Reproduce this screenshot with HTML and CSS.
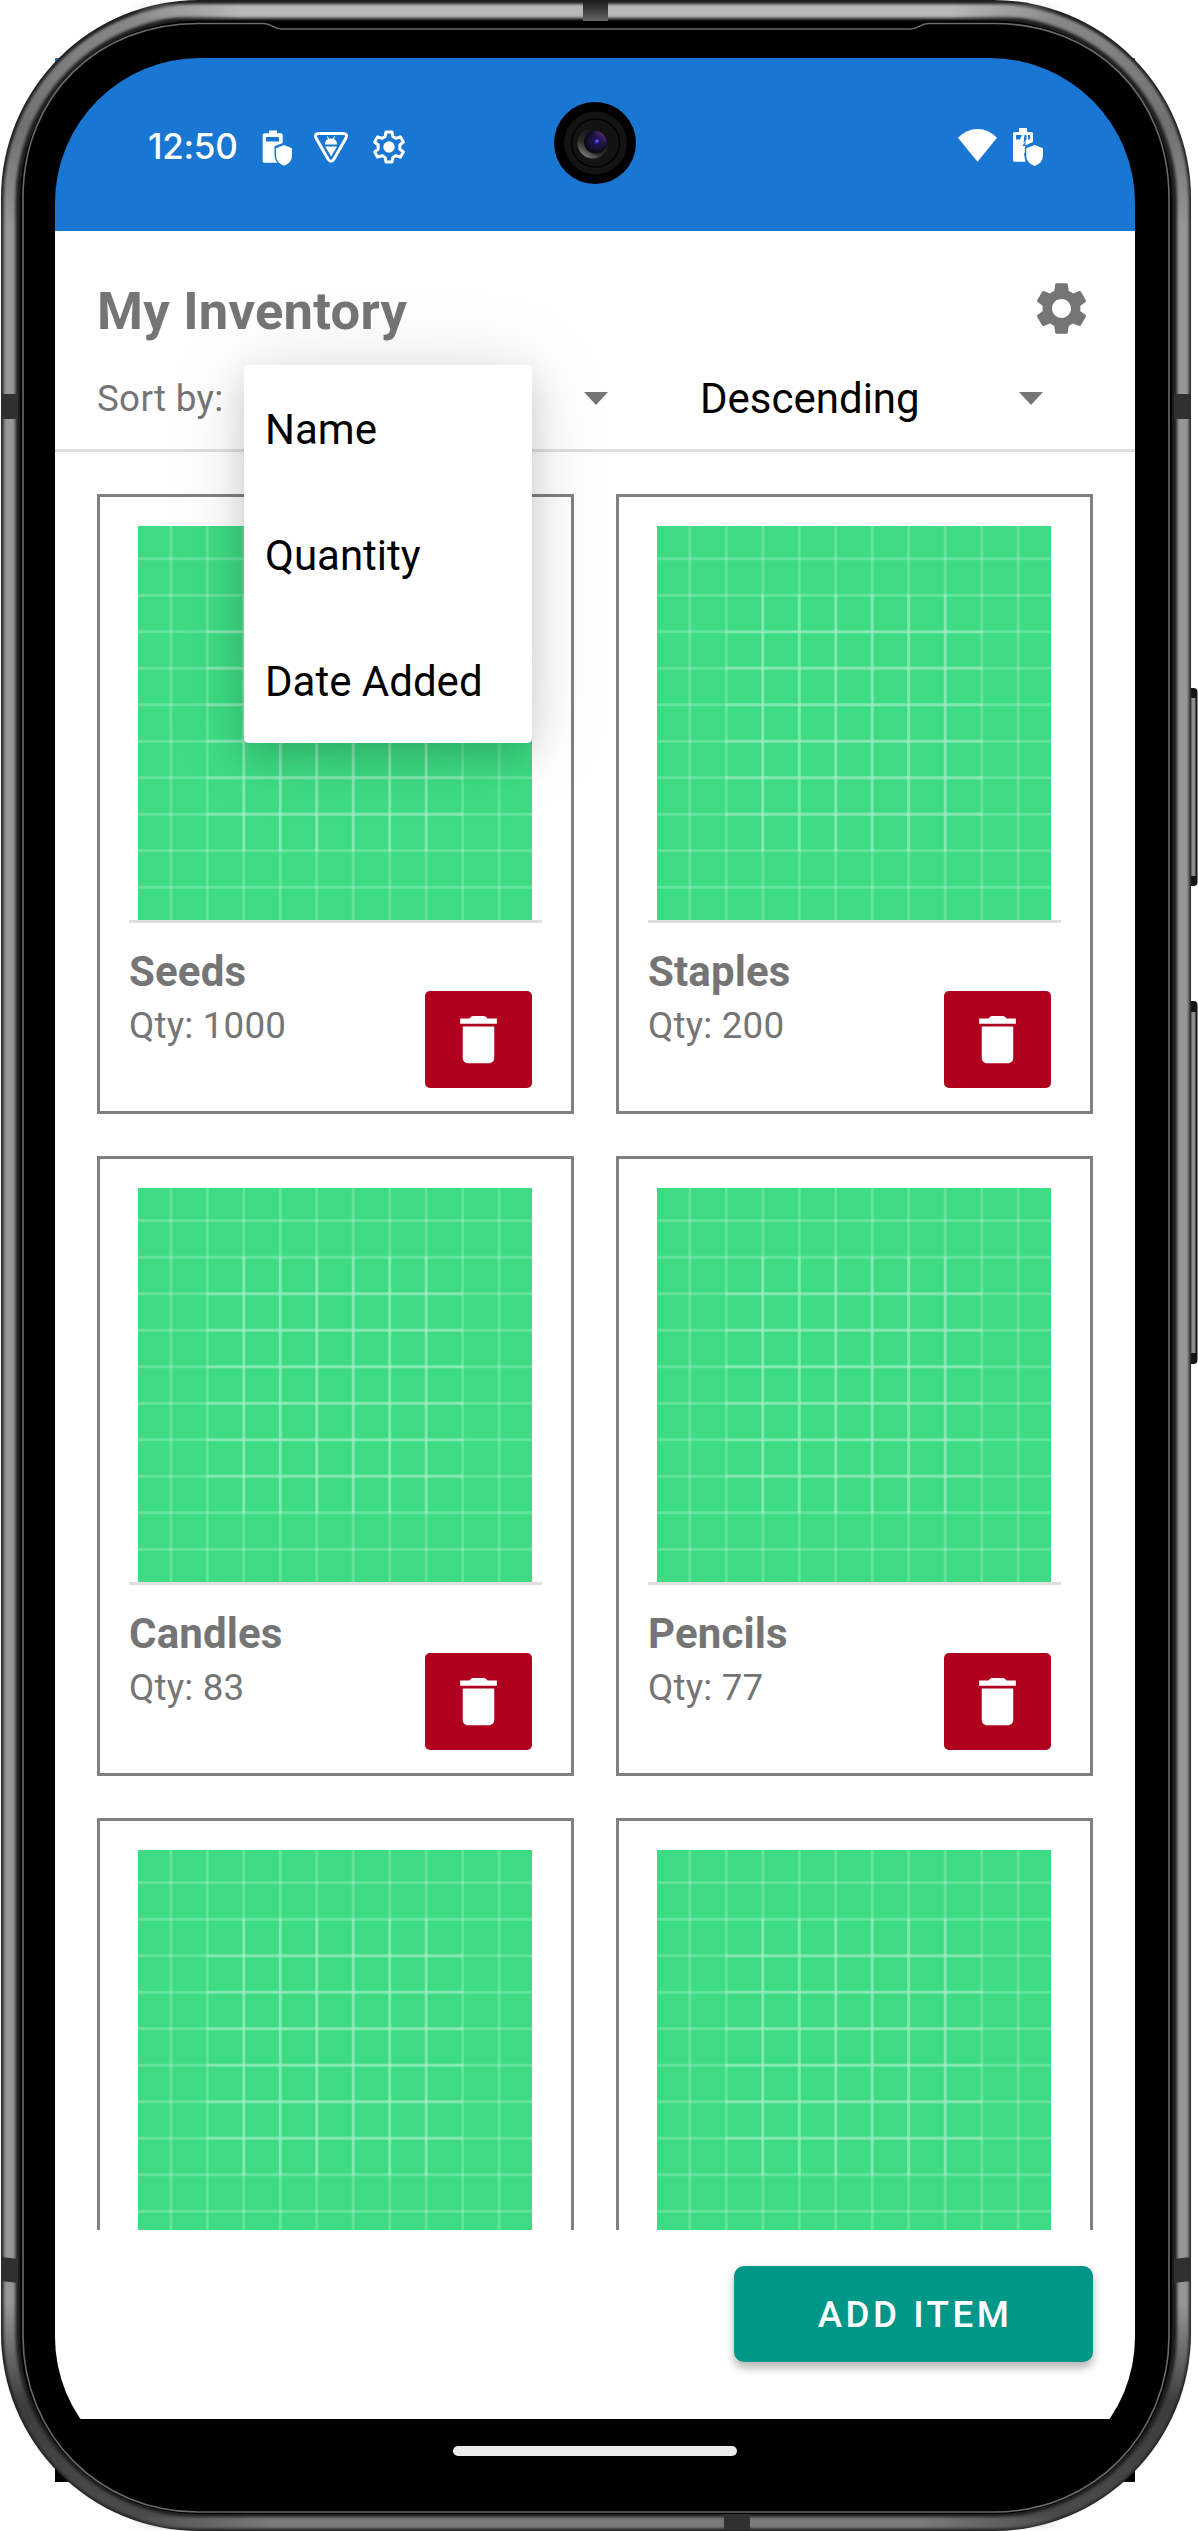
FILE: index.html
```html
<!DOCTYPE html>
<html lang="en">
<head>
<meta charset="utf-8">
<title>My Inventory</title>
<link rel="stylesheet" href="styles.css">
</head>
<body>
<svg class="defs" width="0" height="0" aria-hidden="true">
  <symbol id="placeholder" viewBox="0 0 108 108">
    <rect width="108" height="108" fill="#3ddc84"/>
    <path d="M9 0V108M19 0V108M29 0V108M39 0V108M49 0V108M59 0V108M69 0V108M79 0V108M89 0V108M99 0V108" stroke="#fff" stroke-opacity=".2" stroke-width=".8"/>
    <path d="M0 9H108M0 19H108M0 29H108M0 39H108M0 49H108M0 59H108M0 69H108M0 79H108M0 89H108M0 99H108" stroke="#fff" stroke-opacity=".2" stroke-width=".8"/>
    <path d="M19 29H89M19 39H89M19 49H89M19 59H89M19 69H89M19 79H89M29 19V89M39 19V89M49 19V89M59 19V89M69 19V89M79 19V89" stroke="#fff" stroke-opacity=".2" stroke-width=".8"/>
  </symbol>
  <symbol id="trash" viewBox="0 0 24 24">
    <path fill="#fff" d="M6 19c0 1.1.9 2 2 2h8c1.1 0 2-.9 2-2V7H6v12zM19 4h-3.500l-.7-.7q-.3-.3-.8-.3h-4q-.5 0-.8.3l-.7.7H5v2h14V4z"/>
  </symbol>
</svg>
<div class="device">
  <svg class="frame" width="1198" height="2531" viewBox="0 0 1198 2531" aria-hidden="true">
    <defs>
      <linearGradient id="metal" gradientUnits="userSpaceOnUse" x1="0" y1="0" x2="0" y2="2531">
        <stop offset="0" stop-color="#8c8c8c"/><stop offset=".05" stop-color="#707070"/><stop offset=".09" stop-color="#969696"/>
        <stop offset=".91" stop-color="#969696"/><stop offset=".95" stop-color="#3c3c3c"/><stop offset="1" stop-color="#4c4c4c"/>
      </linearGradient>
      <linearGradient id="topline" gradientUnits="userSpaceOnUse" x1="130" y1="0" x2="1062" y2="0">
        <stop offset="0" stop-color="#b8b8b8" stop-opacity="0"/><stop offset=".12" stop-color="#b8b8b8"/><stop offset=".88" stop-color="#b8b8b8"/><stop offset="1" stop-color="#b8b8b8" stop-opacity="0"/>
      </linearGradient>
      <linearGradient id="bottomline" gradientUnits="userSpaceOnUse" x1="130" y1="0" x2="1062" y2="0">
        <stop offset="0" stop-color="#7a7a7a" stop-opacity="0"/><stop offset=".15" stop-color="#7a7a7a"/><stop offset=".85" stop-color="#7a7a7a"/><stop offset="1" stop-color="#7a7a7a" stop-opacity="0"/>
      </linearGradient>
      <linearGradient id="notch" x1="0" y1="0" x2="0" y2="1"><stop offset="0" stop-color="#1c1c1c"/><stop offset="1" stop-color="#666"/></linearGradient>
      <linearGradient id="key" x1="0" y1="0" x2="1" y2="0"><stop offset="0" stop-color="#555"/><stop offset=".35" stop-color="#999"/><stop offset=".65" stop-color="#888"/><stop offset="1" stop-color="#111"/></linearGradient>
      <filter id="soft" filterUnits="userSpaceOnUse" x="0" y="0" width="1198" height="2531"><feGaussianBlur stdDeviation="1.8"/></filter>
    </defs>
    <path fill="#1976d2" d="M55 58h30v30h-30zM1105 58h30v30h-30z"/>
    <path d="M55 2440h50v42h-50zM1085 2440h50v42h-50z"/>
    <rect x="1185" y="688" width="12.500" height="198" rx="4" fill="#151515"/>
    <rect x="1191" y="698" width="5.500" height="178" fill="url(#key)"/>
    <rect x="1185" y="1001" width="12.500" height="363" rx="4" fill="#151515"/>
    <rect x="1191" y="1012" width="5.500" height="341" fill="url(#key)"/>
    <rect x="1" y="0" width="1190" height="2531" rx="198" fill="#1d1d1d"/>
    <g filter="url(#soft)" fill="none">
      <rect x="9.500" y="10" width="1173.500" height="2513" rx="189" stroke="url(#metal)" stroke-width="12"/>
      <rect x="130" y="4" width="932" height="14" fill="url(#topline)"/>
      <rect x="130" y="2517" width="932" height="11" fill="url(#bottomline)"/>
    </g>
    <rect x="20" y="20.500" width="1152" height="2493.500" rx="178"/>
    <path fill="none" stroke="#6a6a6a" stroke-width="1.600" d="M23 198C23 95 98 23.500 198 23.500H264C272 23.500 273 29 282 29H910C919 29 920 23.500 928 23.500H994C1094 23.500 1169 95 1169 198V2336C1169 2435 1093 2512 994 2512H198C99 2512 23 2435 23 2336Z"/>
    <rect x="583" y="1" width="25" height="20" fill="url(#notch)"/>
    <path fill="#303030" d="M1.500 394H18v25H1.500zM1174 394h17v25h-17zM1.500 2257l16.500 2v24l-16.500-2zM1174 2259l17-2v24l-17 2zM724 2514h26v16h-26z"/>
  </svg>
  <main class="screen">
    <header class="status">
      <span class="clock">12:50</span>
      <svg class="ico-battery" width="30" height="37" viewBox="262 130 30 37">
        <path fill="#fff" fill-rule="evenodd" d="M269 130.500h8v2.700h4.200q1.500 0 1.500 1.500V143l-8.200 3.200v9.500q0 4 3 7H264.200q-1.500 0-1.500-1.500V134.700q0-1.500 1.500-1.500h4.800zM266 137v4.500h13V137z"/>
        <path fill="#fff" d="M284 145l8 3.200v7q0 7.500-8 10.600q-8-3.100-8-10.600v-7z"/>
      </svg>
      <svg class="ico-debug" width="36" height="34" viewBox="313 130 36 34">
        <path fill="none" stroke="#fff" stroke-width="3" stroke-linejoin="round" d="M319 133.500H343Q348 133.500 346 138L334 159Q331 163.500 328 159L316 138Q314 133.500 319 133.500Z"/>
        <path fill="#fff" d="M325 144.500q0-4 3.200-5.400l-1.400-2.300.9-.5 1.500 2.400q1.800-.5 3.600 0l1.500-2.400.9.500-1.400 2.300q3.200 1.400 3.200 5.400zM325.200 146.500H337l-5.900 10z"/>
      </svg>
      <svg class="ico-gear" width="40" height="40" viewBox="0 0 24 24">
        <path fill="none" stroke="#fff" stroke-width="1.800" stroke-linejoin="round" d="M10.200 3h3.600l.5 2.700 1.900 1.100 2.600-.9 1.800 3.100-2.100 1.800v2.400l2.100 1.800-1.800 3.100-2.600-.9-1.900 1.100-.5 2.700h-3.600l-.5-2.700-1.900-1.100-2.600.9L3.400 15l2.100-1.800v-2.400L3.400 9l1.800-3.100 2.600.9 1.900-1.100z"/>
        <circle cx="12" cy="12" r="3.400" fill="#fff"/>
      </svg>
      <svg class="ico-wifi" width="39" height="33" viewBox="958 129 39 33"><path fill="#fff" d="M977.500 161.700L958 137.800Q966.500 129 977.500 129T997 137.800z"/></svg>
      <svg class="ico-charge" width="31" height="38" viewBox="1013 128 31 38">
        <path fill="#fff" fill-rule="evenodd" d="M1019 128h8v4h4.500q1.500 0 1.500 1.500V142l-8 3.500 1-5-3.500 5.500h2.500v6l-1 2 1.500 7.700h-11q-1.500 0-1.500-1.500V133.500q0-1.500 1.500-1.500h4.500zM1016 135v4.500h4L1022 135zM1024.500 135l-1 8 3-3.500V135zM1028 135v4.500h2V135z"/>
        <path fill="#fff" d="M1034.600 145l8.400 3.200v7q0 7.700-8.400 10.800q-8.400-3.100-8.400-10.800v-7z"/>
      </svg>
    </header>

    <section class="toolbar">
      <div class="title-row">
        <h1>My Inventory</h1>
        <svg width="63" height="63" viewBox="0 0 24 24"><path fill="#757575" d="M19.140 12.940c.04-.3.060-.61.060-.94 0-.32-.02-.64-.07-.94l2.030-1.580c.18-.14.230-.41.120-.61l-1.920-3.320c-.12-.22-.37-.29-.59-.22l-2.390.96c-.5-.38-1.030-.7-1.620-.94l-.36-2.540c-.04-.24-.24-.41-.48-.41h-3.840c-.24 0-.43.170-.47.410l-.36 2.540c-.59.240-1.130.570-1.620.940l-2.390-.96c-.22-.08-.47 0-.59.220L2.740 8.870c-.12.210-.08.470.12.610l2.030 1.580c-.05.300-.09.630-.09.940s.02.640.07.940l-2.030 1.580c-.18.140-.23.410-.12.610l1.920 3.320c.12.220.37.290.59.220l2.390-.96c.5.380 1.030.7 1.620.940l.36 2.540c.05.240.24.410.48.410h3.840c.24 0 .44-.17.470-.41l.36-2.540c.59-.24 1.130-.56 1.620-.94l2.390.96c.22.080.47 0 .59-.22l1.920-3.320c.12-.22.070-.47-.12-.61l-2.010-1.580zM12 15.600c-1.980 0-3.600-1.620-3.600-3.600s1.620-3.600 3.600-3.600 3.600 1.620 3.600 3.600-1.620 3.600-3.600 3.600z"/></svg>
      </div>
      <div class="sort-row">
        <span class="sort-label">Sort by:</span>
        <div class="spinner"><span></span><i class="arrow"></i></div>
        <div class="spinner"><span>Descending</span><i class="arrow"></i></div>
      </div>
    </section>

    <section class="list">
      <article class="card">
        <svg class="photo"><use href="#placeholder"/></svg>
        <div class="info"><div class="label"><h2>Seeds</h2><p>Qty: 1000</p></div><button class="delete" aria-label="Delete"><svg width="63" height="63"><use href="#trash"/></svg></button></div>
      </article>
      <article class="card">
        <svg class="photo"><use href="#placeholder"/></svg>
        <div class="info"><div class="label"><h2>Staples</h2><p>Qty: 200</p></div><button class="delete" aria-label="Delete"><svg width="63" height="63"><use href="#trash"/></svg></button></div>
      </article>
      <article class="card">
        <svg class="photo"><use href="#placeholder"/></svg>
        <div class="info"><div class="label"><h2>Candles</h2><p>Qty: 83</p></div><button class="delete" aria-label="Delete"><svg width="63" height="63"><use href="#trash"/></svg></button></div>
      </article>
      <article class="card">
        <svg class="photo"><use href="#placeholder"/></svg>
        <div class="info"><div class="label"><h2>Pencils</h2><p>Qty: 77</p></div><button class="delete" aria-label="Delete"><svg width="63" height="63"><use href="#trash"/></svg></button></div>
      </article>
      <article class="card"><svg class="photo"><use href="#placeholder"/></svg></article>
      <article class="card"><svg class="photo"><use href="#placeholder"/></svg></article>
    </section>

    <footer class="actions"><button class="add">ADD ITEM</button></footer>
    <nav class="navbar"><i class="pill"></i></nav>

    <ul class="menu"><li>Name</li><li>Quantity</li><li>Date Added</li></ul>
    <svg class="camera" width="82" height="82" viewBox="0 0 82 82">
      <defs>
        <radialGradient id="lens" cx=".55" cy=".48" r=".5"><stop offset="0" stop-color="#4a36c8"/><stop offset=".25" stop-color="#1e1458"/><stop offset=".6" stop-color="#1c1238"/><stop offset="1" stop-color="#0a0a14"/></radialGradient>
        <linearGradient id="ring" x1=".2" y1=".9" x2=".7" y2=".2"><stop offset="0" stop-color="#777"/><stop offset=".35" stop-color="#2c2c2c"/><stop offset="1" stop-color="#111"/></linearGradient>
        <linearGradient id="glow" x1=".2" y1=".8" x2="1" y2="0"><stop offset=".5" stop-color="#603090" stop-opacity="0"/><stop offset="1" stop-color="#7a48a8"/></linearGradient>
      </defs>
      <circle cx="41" cy="41" r="41"/>
      <circle cx="41.500" cy="41" r="31.500" fill="#131313"/>
      <circle cx="41.500" cy="41" r="24" fill="#131313" stroke="#000" stroke-width="1.500"/>
      <circle cx="39" cy="41" r="15.500" fill="url(#ring)"/>
      <circle cx="41.500" cy="40" r="11.500" fill="url(#lens)"/>
      <circle cx="41.500" cy="40" r="11" fill="url(#glow)"/>
      <circle cx="43" cy="39" r="1.600" fill="#5a58f0"/>
    </svg>
  </main>
</div>
</body>
</html>
```

FILE: styles.css
```css
* { box-sizing: border-box; margin: 0; padding: 0; }
body { background: #fff; font-family: Roboto, "Liberation Sans", sans-serif; color: #000; }
svg { display: block; }
button { border: 0; font: inherit; }
.defs { position: absolute; }
.device { position: relative; width: 1198px; height: 2531px; padding: 58px 63px 49px 55px; overflow: hidden; }
.frame { position: absolute; left: 0; top: 0; }
.screen {
  position: relative; width: 1080px; height: 2424px; overflow: hidden;
  border-radius: 145px; display: flex; flex-direction: column;
}

/* Status bar */
.status { height: 173px; flex: none; background: #1976d2; color: #fff; display: flex; align-items: flex-start; padding: 70px 91px 0 93px; }
.clock { font: 500 35px/37px Inter, sans-serif; width: 114px; letter-spacing: -0.3px; }
.ico-battery { margin-top: 2px; }
.ico-debug { margin: 2px 0 0 21px; }
.ico-gear { margin: -1px 0 0 20px; }
.ico-wifi { margin: 1px 0 0 auto; }
.ico-charge { margin: 0 0 0 16px; }

/* Header */
.toolbar { height: 221px; flex: none; background: #fff; border-bottom: 3px solid #e0e0e0; padding-top: 46px; }
.title-row { display: flex; align-items: center; justify-content: space-between; height: 63px; padding: 0 42px; }
h1 { font-size: 52.5px; font-weight: 700; line-height: 62px; letter-spacing: 0.25px; color: #757575; padding-top: 4px; }
.sort-row { display: grid; grid-template-columns: 147px 435px 435px; align-items: center; height: 109px; padding: 7px 0 0 42px; }
.sort-label { font-size: 36.75px; letter-spacing: 0.3px; color: #757575; }
.spinner { display: flex; align-items: center; justify-content: space-between; height: 63px; padding: 0 71px 0 21px; font-size: 42px; }
.arrow { border: solid transparent; border-width: 13px 12.5px 0; border-top-color: #757575; }

/* Items */
.list { height: 1778px; flex: none; background: #fff; overflow: hidden; padding: 42px; display: grid; grid-template-columns: 477px 477px; grid-auto-rows: 620px; gap: 42px; }
.card { border: 3px solid #808080; padding: 29px 29px 0; }
.photo { width: 394px; height: 394px; margin-left: 9px; }
.info { border-top: 3px solid #e0e0e0; display: flex; justify-content: space-between; align-items: flex-start; padding-right: 10px; color: #757575; }
.label { padding-top: 24px; }
h2 { font-size: 42px; font-weight: 700; line-height: 49px; letter-spacing: 0.15px; }
.label p { font-size: 36.75px; line-height: 43px; letter-spacing: 0.2px; margin-top: 8px; }
.delete { width: 107px; height: 97px; margin-top: 68px; border-radius: 5px; background: #b00020; display: flex; align-items: center; justify-content: center; }

/* Bottom */
.actions { height: 189px; flex: none; background: #fff; padding: 36px 42px; display: flex; justify-content: flex-end; align-items: flex-start; }
.add {
  width: 359px; height: 96px; border-radius: 10px; background: #009688; color: #fff; padding: 1px 0 0 3px;
  font-size: 36.75px; font-weight: 500; letter-spacing: 3.5px; box-shadow: 0 6px 8px rgba(0,0,0,.24), 0 3px 12px rgba(0,0,0,.08);
}
.navbar { height: 63px; flex: none; background: #000; display: flex; justify-content: center; padding-top: 27px; }
.pill { width: 284px; height: 10px; border-radius: 5px; background: #ebebeb; }

/* Overlays */
.menu {
  position: absolute; left: 189px; top: 307px; width: 288px; height: 378px; padding-top: 2px; list-style: none; background: #fff;
  border-radius: 5px; font-size: 42px; box-shadow: 0 14px 32px rgba(0,0,0,.13), 0 4px 84px rgba(0,0,0,.13);
}
.menu li { height: 126px; line-height: 126px; padding-left: 21px; }
.camera { position: absolute; left: 499px; top: 44px; }
```
